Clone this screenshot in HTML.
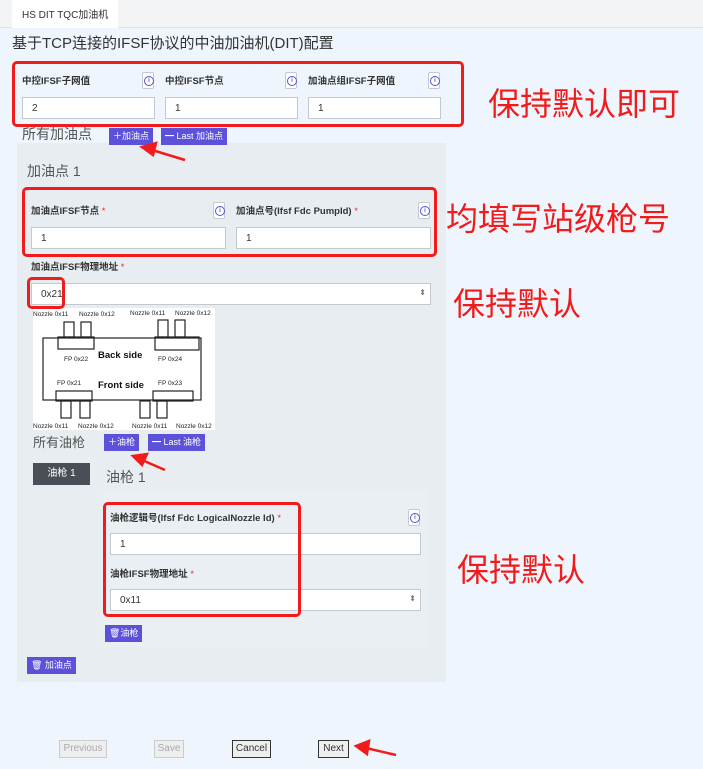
<!DOCTYPE html>
<html><head><meta charset="utf-8"><style>
*{box-sizing:border-box;margin:0;padding:0}
body{width:703px;height:769px;background:#eef5fc;font-family:"Liberation Sans","Noto Sans CJK SC",sans-serif;position:relative;overflow:hidden;color:#333}
.a{position:absolute}
.lbl{position:absolute;font-size:9.5px;font-weight:bold;color:#333;white-space:nowrap}
.lbl i{color:#e03030;font-style:normal;font-weight:normal}
.inp{position:absolute;height:22px;background:#fff;border:1px solid #c4c9d0;font-size:10px;padding:5px 9px;color:#333}
.info{position:absolute;width:12px;height:17px;background:#fff;border:1px solid #c4c9d0;border-radius:2px}
.info:after{content:"i";position:absolute;left:1px;top:3px;width:8px;height:8px;border:1px solid #5a50d8;border-radius:50%;font-size:6px;line-height:8px;text-align:center;color:#5a50d8;font-weight:bold}
.btn{position:absolute;height:17px;background:#5b52d9;color:#fff;font-size:9px;line-height:17px;padding:0 4px;white-space:nowrap}
.red{position:absolute;border:3px solid #f21b1b;border-radius:5px}
.note{position:absolute;color:#f21b1b;font-size:32px;white-space:nowrap;font-family:"Noto Sans CJK SC",sans-serif;line-height:1}
.sel:after{content:"⬍";position:absolute;right:4px;top:4px;font-size:8px;color:#777}
.fb{position:absolute;top:740px;height:18px;border:1px solid #333;background:#eee;font-size:10px;line-height:16px;text-align:center}
</style></head><body>
<div class="a" style="left:0;top:0;width:703px;height:28px;background:#f3f4f6;border-bottom:1px solid #dde3ea"></div>
<div class="a" style="left:12px;top:0;width:106px;height:28px;background:#fff;font-size:10px;padding:6px 10px;white-space:nowrap">HS DIT TQC加油机</div>
<div class="a" style="left:12px;top:32px;font-size:15px;color:#333">基于TCP连接的IFSF协议的中油加油机(DIT)配置</div>

<div class="lbl" style="left:22px;top:73px">中控IFSF子网值</div>
<div class="lbl" style="left:165px;top:73px">中控IFSF节点</div>
<div class="lbl" style="left:308px;top:73px">加油点组IFSF子网值</div>
<div class="info" style="left:142px;top:72px"></div>
<div class="info" style="left:285px;top:72px"></div>
<div class="info" style="left:428px;top:72px"></div>
<div class="inp" style="left:22px;top:97px;width:133px">2</div>
<div class="inp" style="left:165px;top:97px;width:133px">1</div>
<div class="inp" style="left:308px;top:97px;width:133px">1</div>

<div class="a" style="left:17px;top:143px;width:429px;height:539px;background:#e7edf1"></div>
<div class="a" style="left:22px;top:124px;font-size:14px;color:#555">所有加油点</div>
<div class="btn" style="left:109px;top:128px">＋加油点</div>
<div class="btn" style="left:161px;top:128px">━ Last 加油点</div>
<div class="a" style="left:27px;top:161px;font-size:14px;color:#555">加油点 1</div>

<div class="lbl" style="left:31px;top:203px">加油点IFSF节点 <i>*</i></div>
<div class="lbl" style="left:236px;top:203px">加油点号(Ifsf Fdc PumpId) <i>*</i></div>
<div class="info" style="left:213px;top:202px"></div>
<div class="info" style="left:418px;top:202px"></div>
<div class="inp" style="left:31px;top:227px;width:195px">1</div>
<div class="inp" style="left:236px;top:227px;width:195px">1</div>
<div class="lbl" style="left:31px;top:259px">加油点IFSF物理地址 <i>*</i></div>
<div class="inp sel" style="left:31px;top:283px;width:400px">0x21</div>

<svg class="a" style="left:33px;top:308px" width="182" height="122" viewBox="0 0 182 122">
<rect width="182" height="122" fill="#fff"/>
<g fill="none" stroke="#222" stroke-width="1.2">
<rect x="10" y="30" width="158" height="62"/>
<rect x="25" y="29" width="36" height="12"/>
<rect x="122" y="29" width="44" height="13"/>
<rect x="23" y="83" width="36" height="10"/>
<rect x="120" y="83" width="40" height="10"/>
<rect x="31" y="14" width="10" height="15"/><rect x="48" y="14" width="10" height="15"/>
<rect x="125" y="12" width="10" height="17"/><rect x="142" y="12" width="10" height="17"/>
<rect x="28" y="93" width="10" height="17"/><rect x="47" y="93" width="10" height="17"/>
<rect x="107" y="93" width="10" height="17"/><rect x="124" y="93" width="10" height="17"/>
</g>
<g font-size="6.5" fill="#222" font-family="Liberation Sans">
<text x="0" y="8">Nozzle 0x11</text><text x="46" y="8">Nozzle 0x12</text>
<text x="97" y="7">Nozzle 0x11</text><text x="142" y="7">Nozzle 0x12</text>
<text x="31" y="53">FP 0x22</text><text x="125" y="53">FP 0x24</text>
<text x="24" y="77">FP 0x21</text><text x="125" y="77">FP 0x23</text>
<text x="0" y="120">Nozzle 0x11</text><text x="45" y="120">Nozzle 0x12</text>
<text x="99" y="120">Nozzle 0x11</text><text x="143" y="120">Nozzle 0x12</text>
</g>
<g font-size="9.5" font-weight="bold" fill="#111" font-family="Liberation Sans">
<text x="65" y="50">Back side</text><text x="65" y="80">Front side</text></g>
</svg>

<div class="a" style="left:33px;top:432px;font-size:13px;color:#555">所有油枪</div>
<div class="btn" style="left:104px;top:434px">＋油枪</div>
<div class="btn" style="left:148px;top:434px">━ Last 油枪</div>
<div class="a" style="left:33px;top:463px;width:57px;height:22px;background:#4a4f57;color:#fff;font-size:10px;line-height:22px;text-align:center">油枪 1</div>
<div class="a" style="left:106px;top:467px;font-size:14px;color:#555">油枪 1</div>
<div class="a" style="left:103px;top:490px;width:325px;height:157px;background:#e9eff2"></div>
<div class="lbl" style="left:110px;top:510px">油枪逻辑号(Ifsf Fdc LogicalNozzle Id) <i>*</i></div>
<div class="info" style="left:408px;top:509px"></div>
<div class="inp" style="left:110px;top:533px;width:311px">1</div>
<div class="lbl" style="left:110px;top:566px">油枪IFSF物理地址 <i>*</i></div>
<div class="inp sel" style="left:110px;top:589px;width:311px">0x11</div>
<div class="btn" style="left:105px;top:625px">🗑油枪</div>
<div class="btn" style="left:27px;top:657px">🗑 加油点</div>

<div class="fb" style="left:59px;width:48px;color:#aaa;border-color:#ccc">Previous</div>
<div class="fb" style="left:154px;width:30px;color:#aaa;border-color:#ccc">Save</div>
<div class="fb" style="left:232px;width:39px">Cancel</div>
<div class="fb" style="left:318px;width:31px">Next</div>

<div class="red" style="left:12px;top:61px;width:452px;height:66px"></div>
<div class="red" style="left:22px;top:187px;width:415px;height:70px"></div>
<div class="red" style="left:27px;top:277px;width:38px;height:32px"></div>
<div class="red" style="left:103px;top:502px;width:198px;height:115px"></div>
<div class="note" style="left:488px;top:86px">保持默认即可</div>
<div class="note" style="left:446px;top:201px">均填写站级枪号</div>
<div class="note" style="left:453px;top:286px">保持默认</div>
<div class="note" style="left:457px;top:552px">保持默认</div>
<svg class="a" style="left:0;top:0" width="703" height="769">
<g fill="#f21b1b" stroke="#f21b1b" stroke-width="2.5">
<line x1="185" y1="160" x2="152" y2="150"/><polygon points="142,147 156,143 153,155"/>
<line x1="165" y1="470" x2="142" y2="460"/><polygon points="133,456 147,454 142,465"/>
<line x1="396" y1="755" x2="366" y2="748"/><polygon points="356,746 369,741 367,754"/>
</g></svg>
</body></html>
